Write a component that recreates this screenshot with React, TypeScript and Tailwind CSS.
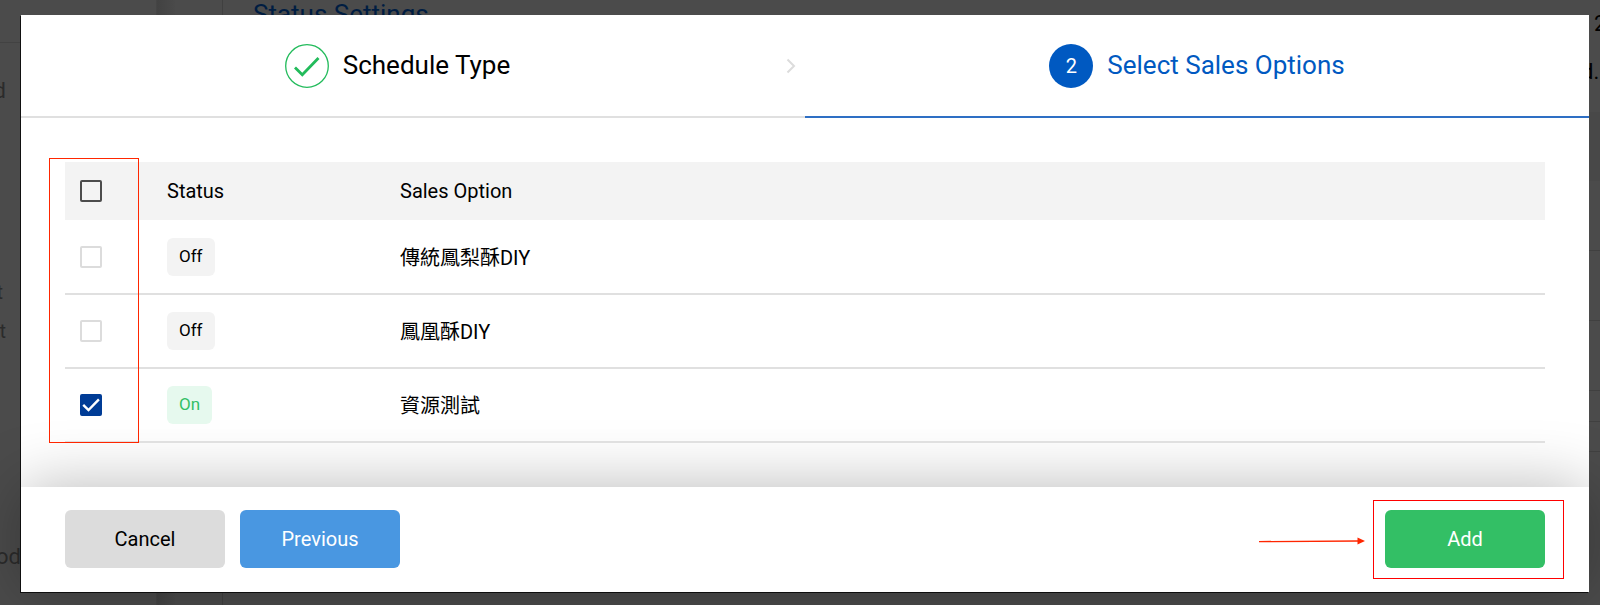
import React, { useState } from "react";

type Option = { id: string; name: string; on: boolean };

const options: Option[] = [
  { id: "a", name: "傳統鳳梨酥DIY", on: false },
  { id: "b", name: "鳳凰酥DIY", on: false },
  { id: "c", name: "資源測試", on: true },
];

function Checkbox({
  label,
  checked,
  muted,
  onChange,
}: {
  label: string;
  checked: boolean;
  muted?: boolean;
  onChange: () => void;
}) {
  const border = muted ? "border-[#dcdcdc]" : "border-[#4c4c4c]";
  return (
    <span className="grid size-[22px]">
      <input
        type="checkbox"
        aria-label={label}
        checked={checked}
        onChange={onChange}
        className={`col-start-1 row-start-1 size-[22px] appearance-none rounded-xs border-2 checked:border-[#003c96] checked:bg-[#003c96] ${border}`}
      />
      {checked && (
        <svg viewBox="0 0 22 22" className="pointer-events-none col-start-1 row-start-1 size-[22px]" fill="none" stroke="#fff" strokeWidth="2.4">
          <path d="M3.2 10.8 8.5 16 18.9 5.400" />
        </svg>
      )}
    </span>
  );
}

function Backdrop() {
  return (
    <div aria-hidden="true" className="absolute inset-0 flex overflow-hidden bg-[#4b4b4b] text-[22px]">
      <div className="w-[157px] shrink-0 border-r border-[#454545] text-[#2b2b2b]">
        <div className="h-[43px] border-b border-[#424242]" />
        <span className="absolute top-[77px] right-full -mr-[6px] leading-7">d</span>
        <span className="absolute top-[280px] right-full -mr-[3px] text-[20px] leading-6">t</span>
        <span className="absolute top-[319px] right-full -mr-[6px] text-[20px] leading-6">t</span>
        <span className="absolute top-[543px] right-full -mr-[21px] leading-7">od</span>
      </div>
      <div className="w-[18px] shrink-0 bg-linear-to-r from-[#424242] to-[#4a4a4a]" />
      <div className="ml-[47px] grow border-l border-[#404040] pl-[30px]">
        <p className="text-[26px] leading-7 text-[#001d42]">Status Settings</p>
      </div>
      <div className="w-[11px] shrink-0 text-black">
        <div className="h-28" />
        <div className="h-[69px] bg-[#484848]" />
        <div className="h-[70px] border-b border-[#404040]" />
        <div className="h-[70px] border-b border-[#404040]" />
        <div className="h-[70px] border-b border-[#404040]" />
        <div className="h-[31px] border-b border-[#404040]" />
        <div className="h-[30px] border-b border-[#404040]" />
        <span className="absolute top-[10px] left-full -ml-[6px] leading-7">2</span>
        <span className="absolute top-[58px] left-full -ml-[19px] leading-7">d.</span>
      </div>
    </div>
  );
}

export default function App() {
  const [selected, setSelected] = useState<string[]>(["c"]);
  const [all, setAll] = useState(false);
  const toggle = (id: string) =>
    setSelected((s) => (s.includes(id) ? s.filter((x) => x !== id) : [...s, id]));

  return (
    <div className="relative isolate min-h-screen bg-[#4b4b4b] pt-[15px] pr-[11px] pb-[13px] pl-[21px] font-['Roboto','Noto_Sans_CJK_TC',sans-serif] text-xl text-black">
      <Backdrop />
      <div role="dialog" aria-label="Add schedule" className="relative bg-white shadow-[-1px_1px_0_#111]">
        <ol className="flex h-[103px] text-[26px]">
          <li className="flex flex-1 items-center border-b-2 border-[#e0e0e0]">
            <div className="flex flex-1 items-center justify-center gap-[14px] pr-3">
              <svg viewBox="0 0 44 44" className="size-11" fill="none" stroke="#22bb5b">
                <circle cx="22" cy="22" r="21.3" strokeWidth="1.3" />
                <path d="M10 23.5 17.3 30.8 33.5 14" strokeWidth="2.8" />
              </svg>
              <span>Schedule Type</span>
            </div>
            <svg viewBox="0 0 10 16" className="mr-[9px] h-4 w-[10px]" fill="none" stroke="#dcdcdc" strokeWidth="2">
              <path d="M1.5 1.5 8 8 1.5 14.5" />
            </svg>
          </li>
          <li aria-current="step" className="flex flex-1 items-center justify-center gap-[14px] border-b-2 border-[#2e6fc4] text-[#0059c1]">
            <span className="flex size-11 items-center justify-center rounded-full bg-[#0059c1] text-xl text-white">2</span>
            <span>Select Sales Options</span>
          </li>
        </ol>

        <div className="p-11">
          <div className="relative">
            <table className="w-full table-fixed border-collapse text-left">
              <colgroup>
                <col className="w-[102px]" />
                <col className="w-[233px]" />
                <col />
              </colgroup>
              <thead className="bg-[#f3f3f3]">
                <tr className="h-[58px]">
                  <th scope="col" className="pl-[15px]">
                    <Checkbox label="Select all" checked={all} onChange={() => setAll(!all)} />
                  </th>
                  <th scope="col" className="font-normal">Status</th>
                  <th scope="col" className="font-normal">Sales Option</th>
                </tr>
              </thead>
              <tbody>
                {options.map((o) => (
                  <tr key={o.id} className="h-[74px] border-b-2 border-[#e0e0e0]">
                    <td className="pl-[15px]">
                      <Checkbox
                        label={o.name}
                        muted
                        checked={selected.includes(o.id)}
                        onChange={() => toggle(o.id)}
                      />
                    </td>
                    <td>
                      <span
                        className={`inline-flex h-[38px] items-center rounded-md px-3 text-[17px] ${
                          o.on ? "bg-[#e6f9ee] text-[#33bf65]" : "bg-[#f3f3f3]"
                        }`}
                      >
                        {o.on ? "On" : "Off"}
                      </span>
                    </td>
                    <td className="pt-[2px]">{o.name}</td>
                  </tr>
                ))}
              </tbody>
            </table>
            <div className="pointer-events-none absolute -top-1 bottom-0 -left-4 w-[90px] border border-[#ff2600]" />
          </div>
        </div>

        <div className="flex gap-[15px] bg-white px-11 pt-[23px] pb-6 shadow-[0_0_64px_rgba(0,0,0,0.28)]">
          <button type="button" className="h-[58px] w-40 rounded-md bg-[#dcdcdc]">Cancel</button>
          <button type="button" className="h-[58px] w-40 rounded-md bg-[#4997e1] text-white">Previous</button>
          <div className="relative ml-auto">
            <button type="button" className="h-[58px] w-40 rounded-md bg-[#33bf65] text-white">Add</button>
            <div className="pointer-events-none absolute -top-[10px] -right-[19px] -bottom-[11px] -left-3 border border-[#ff0000]" />
            <svg viewBox="0 0 106 10" className="pointer-events-none absolute top-[26px] right-full mr-5 h-[10px] w-[106px]">
              <path d="M0 5.6 99 5" stroke="#ff2600" strokeWidth="1.3" />
              <path d="M98.5 1.5 106 5 98.5 8.5Z" fill="#ff2600" />
            </svg>
          </div>
        </div>
      </div>
    </div>
  );
}
